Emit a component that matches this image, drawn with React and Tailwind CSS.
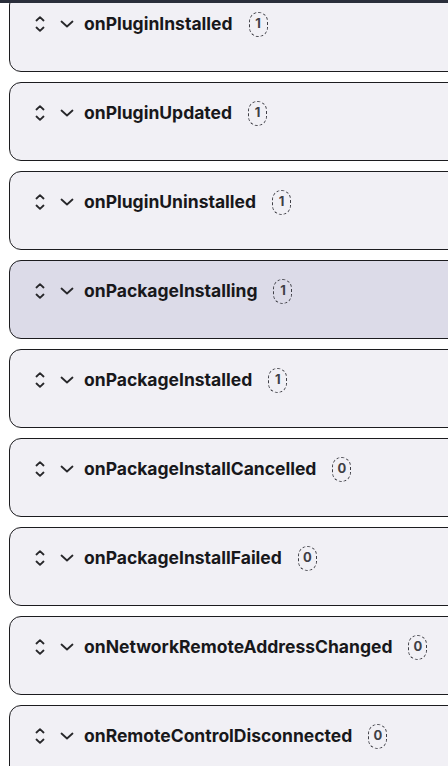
import React from 'react';

const hooks = [
    { name: 'onPluginInstalled', count: 1 },
    { name: 'onPluginUpdated', count: 1 },
    { name: 'onPluginUninstalled', count: 1 },
    { name: 'onPackageInstalling', count: 1, active: true },
    { name: 'onPackageInstalled', count: 1 },
    { name: 'onPackageInstallCancelled', count: 0 },
    { name: 'onPackageInstallFailed', count: 0 },
    { name: 'onNetworkRemoteAddressChanged', count: 0 },
    { name: 'onRemoteControlDisconnected', count: 0 },
];

const SortIcon = () => (
    <svg width="10" height="16" viewBox="0 0 10 16" fill="none" stroke="#27272a" strokeWidth="1.8" strokeLinecap="round" strokeLinejoin="round">
        <polyline points="1.5,4.5 5,1.2 8.5,4.5" />
        <polyline points="1.5,11.5 5,14.8 8.5,11.5" />
    </svg>
);

const ChevronDown = () => (
    <svg width="14" height="8" viewBox="0 0 14 8" fill="none" stroke="#27272a" strokeWidth="1.8" strokeLinecap="round" strokeLinejoin="round">
        <polyline points="1.5,1.5 7,6.5 12.5,1.5" />
    </svg>
);

const HookCard = ({ hook }) => (
    <div
        className={`w-[470px] h-[79px] ml-[9px] mb-[10px] shrink-0 rounded-xl border border-[#1c1c1f] ${hook.active ? 'bg-[#dcdbe8]' : 'bg-[#f1f0f5]'}`}
    >
        <div className="flex items-center h-6 mt-[18px] pl-[24px]">
            <span className="flex items-center justify-center w-[12px]">
                <SortIcon />
            </span>
            <span className="flex items-center ml-[14px]">
                <ChevronDown />
            </span>
            <span className="ml-[10px] text-[17.5px] font-bold text-[#18181b]">{hook.name}</span>
            <span className="ml-[16px] flex items-center justify-center w-[19px] h-[25px] rounded-full border border-dashed border-[#3f3f46] text-[13px] font-bold text-[#3f3f46]">
                {hook.count}
            </span>
        </div>
    </div>
);

const App = () => {
    return (
        <div className="relative h-[766px] w-[448px] overflow-hidden bg-white" style={{ fontFamily: 'Inter, "Liberation Sans", sans-serif' }}>
            {/* sticky header edge over the list */}
            <div className="absolute top-0 left-0 right-0 z-10 h-[3px] bg-[#2a2e3b]" />
            <div className="flex flex-col -mt-[7px]">
                {hooks.map((hook) => (
                    <HookCard key={hook.name} hook={hook} />
                ))}
            </div>
        </div>
    );
};

export default App;
